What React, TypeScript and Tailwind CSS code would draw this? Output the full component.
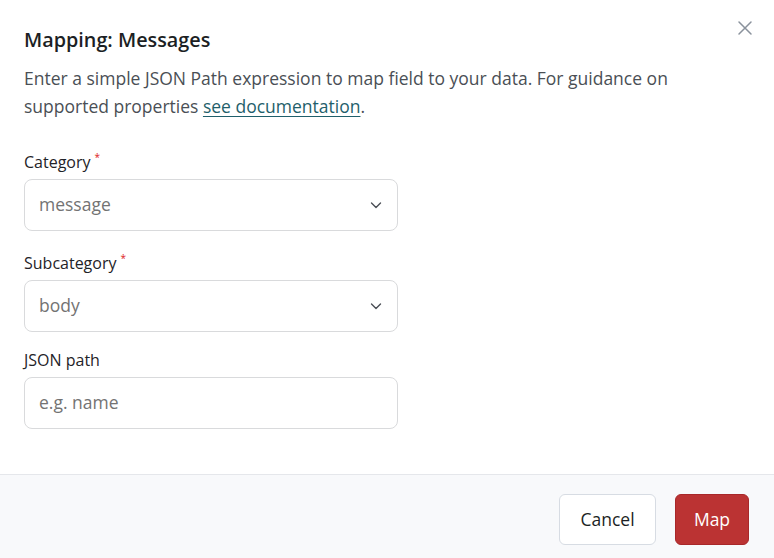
import React from "react";

function Chevron() {
  return (
    <svg width="14" height="14" viewBox="0 0 14 14" fill="none" className="text-[#4b4f56]">
      <path d="M2.5 5l4.5 4.5L11.5 5" stroke="currentColor" strokeWidth="1.4" strokeLinecap="round" strokeLinejoin="round" />
    </svg>
  );
}

function Field({ label, required, className, children }: { label: string; required?: boolean; className?: string; children: React.ReactNode }) {
  return (
    <div className={"flex flex-col " + (className ?? "")}>
      <label className="text-[16px] leading-[20px] text-[#1f2328] mb-[7px]">
        {label}
        {required && <span className="text-[#d22] text-[10px] align-top relative top-[-5px] ml-[4px]">*</span>}
      </label>
      {children}
    </div>
  );
}

function Select({ value }: { value: string }) {
  return (
    <div className="w-[374px] h-[52px] rounded-[8px] border border-[#d9dadc] bg-white flex items-center justify-between pl-[14px] pr-[14px]">
      <span className="text-[17.5px] text-[#737373] relative top-[-1px]">{value}</span>
      <Chevron />
    </div>
  );
}

export default function App() {
  const font = { fontFamily: "'Open Sans', 'Liberation Sans', sans-serif" };
  return (
    <div className="w-[774px] h-[558px] bg-white flex flex-col" style={font}>
      <div className="flex-1 relative px-[24px] pt-[28px]">
        <button className="absolute right-[21px] top-[20px] text-[#8a929c]" aria-label="Close">
          <svg width="16" height="16" viewBox="0 0 16 16" fill="none">
            <path d="M2 2l12 12M14 2L2 14" stroke="currentColor" strokeWidth="1.5" strokeLinecap="round" />
          </svg>
        </button>
        <h2 className="text-[19.8px] leading-[24px] font-semibold text-[#1c1f24]">Mapping: Messages</h2>
        <p className="mt-[12px] text-[17.5px] leading-[28px] text-[#4a4f55]">
          Enter a simple JSON Path expression to map field to your data. For guidance on
          <br />
          supported properties{" "}
          <a href="#" className="text-[#1f5f6b] underline underline-offset-[3px]">see documentation</a>.
        </p>
        <div className="mt-[32px] flex flex-col">
          <Field label="Category" required>
            <Select value="message" />
          </Field>
          <Field label="Subcategory" required className="mt-[22px]">
            <Select value="body" />
          </Field>
          <Field label="JSON path" className="mt-[18px]">
            <input
              placeholder="e.g. name"
              className="w-[374px] h-[52px] rounded-[8px] border border-[#d9dadc] bg-white px-[14px] pb-[2px] text-[17.5px] placeholder:text-[#737373] outline-none"
              style={font}
            />
          </Field>
        </div>
      </div>
      <div className="h-[84px] border-t border-[#e5e7eb] bg-[#f8f9fb] flex items-start justify-end gap-[19px] pr-[25px] pt-[19px]">
        <button className="h-[51px] w-[97px] rounded-[6px] border border-[#d7dce3] bg-white text-[17.5px] text-[#1c1f24]">Cancel</button>
        <button className="h-[51px] w-[74px] rounded-[6px] border border-[#a8282a] bg-[#bb3333] text-[17.5px] text-white">Map</button>
      </div>
    </div>
  );
}
